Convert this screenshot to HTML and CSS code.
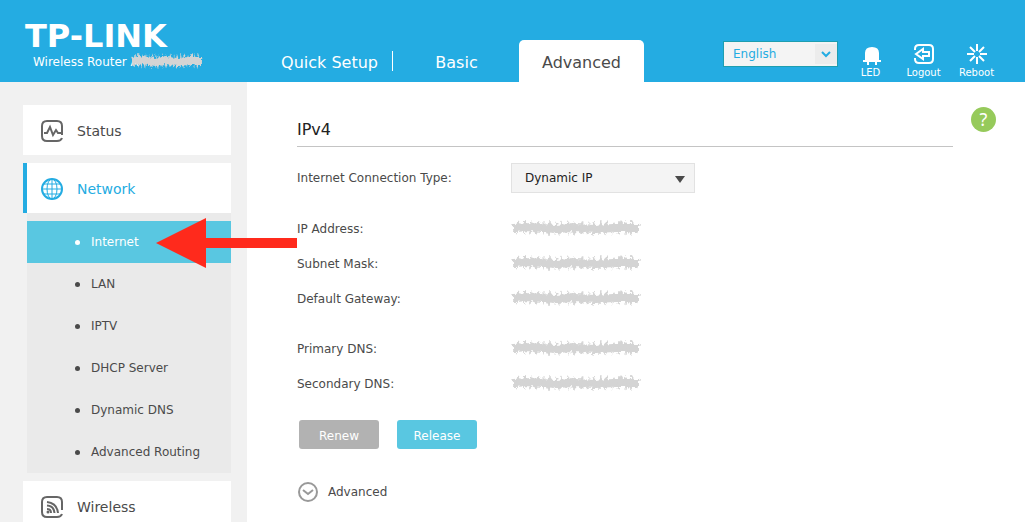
FILE: index.html
```html
<!doctype html>
<html lang="en">
<head>
  <meta charset="UTF-8">
  <title>TP-LINK Wireless Router</title>
  <link rel="stylesheet" href="styles.css">
</head>
<body>
  <!-- shared scribble used to hide private values -->
  <svg class="defs" aria-hidden="true">
    <symbol id="redacted" viewBox="0 0 130 16" preserveAspectRatio="none">
      <filter id="rough" x="-5%" y="-20%" width="110%" height="140%">
        <feTurbulence type="fractalNoise" baseFrequency="0.3" numOctaves="2" seed="4"/>
        <feDisplacementMap in="SourceGraphic" scale="5" xChannelSelector="R" yChannelSelector="G"/>
        <feGaussianBlur stdDeviation="0.4"/>
      </filter>
      <g filter="url(#rough)">
        <path class="smear" d="M2 8 L20 7 L44 9 L64 8 L84 9 L104 8 L128 8"/>
        <path class="scratch" d="M1 4 L6 12 L7 3 L13 12 L14 2 L19 12 L21 4 L25 13 L27 3 L32 12 L33 5 L37 13 L39 3 L44 12 L45 4 L49 13 L51 4 L56 12 L57 3 L63 13 L64 4 L69 12 L71 3 L76 12 L78 5 L82 13 L83 4 L88 12 L90 3 L94 13 L96 2 L101 12 L103 4 L107 12 L109 2 L114 12 L115 4 L120 13 L121 2 L126 11 L128 4"/>
      </g>
    </symbol>
  </svg>

  <header class="header">
    <div class="brand">
      <div class="logo">TP-LINK</div>
      <div class="model">Wireless Router A<svg class="redacted model-redacted" aria-hidden="true"><use href="#redacted"/></svg></div>
    </div>
    <nav class="tabs">
      <a class="tab first" href="#">Quick Setup</a>
      <a class="tab" href="#">Basic</a>
      <a class="tab active" href="#">Advanced</a>
    </nav>
    <div class="tools">
      <div class="lang">
        <select class="lang-select" aria-label="Language"><option>English</option></select>
        <svg class="lang-arrow" viewBox="0 0 22 20" aria-hidden="true"><path d="M7 8l4 4 4-4"/></svg>
      </div>
      <a class="tool" href="#">
        <svg width="22" height="22" viewBox="0 0 22 22"><path fill="#fff" d="M5 17v-7q0-6 7-6t7 6v7h2v2h-4v3h-2v-3H9v3H7v-3H3v-2z"/></svg>
        LED
      </a>
      <a class="tool" href="#">
        <svg class="line" width="22" height="22" viewBox="0 0 22 22"><path d="M2 7V6q0-4 4-4h10q4 0 4 4v10q0 4-4 4H6q-4 0-4-4v-1"/><path d="M3 11l7-5v3h6v4h-6v3z"/></svg>
        Logout
      </a>
      <a class="tool" href="#">
        <svg class="line" width="22" height="22" viewBox="0 0 22 22"><path d="M11 1v7M11 14v7M1 11h7M14 11h7M4 4l5 5M13 13l5 5M4 18l5-5M13 9l5-5"/></svg>
        Reboot
      </a>
    </div>
  </header>

  <div class="page">
    <aside class="sidebar">
      <a class="menu" href="#">
        <svg class="menu-icon" viewBox="0 0 24 24"><path d="M22 16V7q0-5-5-5H7Q2 2 2 7v10q0 5 5 5h10q4 0 5-3"/><path d="M4 14h3l3-6 3 8 3-5 2 3h3"/></svg>
        Status
      </a>
      <a class="menu current" href="#">
        <svg class="menu-icon" viewBox="0 0 24 24"><circle cx="12" cy="12" r="10"/><path class="thin" d="M12 2v20M2 12h20M4 7h16M4 17h16"/><ellipse class="thin" cx="12" cy="12" rx="5" ry="10"/></svg>
        Network
      </a>
      <div class="submenu">
        <a class="item selected" href="#">Internet
          <svg class="pointer" viewBox="0 0 141 50" aria-hidden="true"><path d="M0 25L50 0v20h91v10H50v20z"/></svg>
        </a>
        <a class="item" href="#">LAN</a>
        <a class="item" href="#">IPTV</a>
        <a class="item" href="#">DHCP Server</a>
        <a class="item" href="#">Dynamic DNS</a>
        <a class="item" href="#">Advanced Routing</a>
      </div>
      <a class="menu" href="#">
        <svg class="menu-icon" viewBox="0 0 24 24"><path d="M22 15V7q0-5-5-5H7Q2 2 2 7v10q0 5 5 5h10q4 0 5-3"/><path d="M7 7q10 1 11 11M7 10.500q7 .5 7.500 7.500M7 14q4 0 4 4"/><circle class="dot" cx="8" cy="17" r="1.500"/></svg>
        Wireless
      </a>
    </aside>

    <main class="content">
      <section class="panel">
        <h1 class="title">IPv4</h1>
        <div class="row type-row">
          <label class="label" for="type">Internet Connection Type:</label>
          <div class="type">
            <select class="type-select" id="type"><option>Dynamic IP</option></select>
            <svg class="type-arrow" viewBox="0 0 12 7" aria-hidden="true"><path d="M1 0h10L6 7z"/></svg>
          </div>
        </div>
        <div class="group">
          <div class="row"><span class="label">IP Address:</span><svg class="redacted" role="img" aria-label="hidden"><use href="#redacted"/></svg></div>
          <div class="row"><span class="label">Subnet Mask:</span><svg class="redacted" role="img" aria-label="hidden"><use href="#redacted"/></svg></div>
          <div class="row"><span class="label">Default Gateway:</span><svg class="redacted" role="img" aria-label="hidden"><use href="#redacted"/></svg></div>
        </div>
        <div class="group">
          <div class="row"><span class="label">Primary DNS:</span><svg class="redacted" role="img" aria-label="hidden"><use href="#redacted"/></svg></div>
          <div class="row"><span class="label">Secondary DNS:</span><svg class="redacted" role="img" aria-label="hidden"><use href="#redacted"/></svg></div>
        </div>
        <div class="buttons">
          <button class="btn off" type="button">Renew</button>
          <button class="btn" type="button">Release</button>
        </div>
        <a class="more" href="#">
          <svg width="22" height="22" viewBox="0 0 22 22"><circle cx="11" cy="11" r="9"/><path d="M6 9l5 4 5-4"/></svg>
          Advanced
        </a>
      </section>
      <button class="help" type="button" aria-label="Help">?</button>
    </main>
  </div>
</body>
</html>
```
FILE: styles.css
```css
*{
  box-sizing: border-box;
}

body{
  margin: 0;
  min-height: 100vh;
  display: flex;
  flex-direction: column;
  font: 12px/20px Verdana, "DejaVu Sans", sans-serif;
  color: #4a4a4a;
  background: #fff;
  overflow: hidden;
}

a{
  color: inherit;
  text-decoration: none;
}

svg{
  fill: none;
  flex: none;
}

.defs{
  position: absolute;
  width: 0;
  height: 0;
}

/* header */
.header{
  display: flex;
  height: 82px;
  color: #fff;
  background: #24ace2;
}

.brand{
  width: 257px;
  padding: 20px 0 0 25px;
}

.logo{
  font-size: 32px;
  font-weight: bold;
  line-height: 32px;
}

.model{
  display: flex;
  align-items: center;
  padding-left: 8px;
  white-space: nowrap;
}

.tabs{
  display: flex;
  align-items: flex-end;
  font-size: 16px;
}

.tab{
  position: relative;
  width: 125px;
  height: 42px;
  padding-top: 13px;
  text-align: center;
}

.tab.first{
  width: 137px;
  padding-left: 8px;
}

.tab.first::after{
  content: "";
  position: absolute;
  right: 1px;
  top: 11px;
  height: 20px;
  border-right: 1px solid #fff;
}

.tab.active{
  color: #4a4a4a;
  background: #fff;
  border-radius: 5px 5px 0 0;
}

.tools{
  display: flex;
  margin-left: auto;
  padding: 41px 22px 0 0;
}

.lang{
  position: relative;
  width: 115px;
  height: 26px;
  margin-right: 6px;
}

select{
  appearance: none;
  width: 100%;
  height: 100%;
  margin: 0;
  font: inherit;
  border-radius: 0;
}

.lang-select{
  padding: 0 9px 1px;
  color: #24ace2;
  background: #f4f4f4;
  border: 1px solid #1e9eb0;
}

.lang-arrow{
  position: absolute;
  right: 1px;
  top: 3px;
  width: 22px;
  height: 20px;
  background: #ececec;
  stroke: #24ace2;
  stroke-width: 2;
  pointer-events: none;
}

.tool{
  display: flex;
  flex-direction: column;
  align-items: center;
  width: 53px;
  padding-top: 2px;
  font-size: 10px;
  line-height: 16px;
}

.line{
  stroke: #fff;
  stroke-width: 2;
}

/* left menu */
.page{
  display: flex;
  flex: 1;
}

.sidebar{
  width: 247px;
  padding: 23px 16px 0 23px;
  background: #f1f1f1;
}

.menu{
  display: flex;
  align-items: center;
  gap: 13px;
  height: 50px;
  padding-left: 17px;
  padding-top: 2px;
  margin-bottom: 8px;
  font-size: 14px;
  background: #fff;
}

.menu.current{
  padding-left: 13px;
  margin-bottom: 0;
  color: #24ace2;
  border-left: 4px solid #24ace2;
}

.menu-icon{
  width: 24px;
  height: 24px;
  stroke: #666;
  stroke-width: 2;
}

.current .menu-icon{
  stroke: #24ace2;
}

.menu-icon .thin{
  stroke-width: 1;
}

.menu-icon .dot{
  fill: #666;
  stroke: none;
}

.submenu{
  margin: 0 0 8px 4px;
  padding-top: 8px;
  background: #eaeaea;
}

.item{
  position: relative;
  display: flex;
  align-items: center;
  gap: 11px;
  height: 42px;
  padding-left: 48px;
}

.item::before{
  content: "";
  width: 5px;
  height: 5px;
  border-radius: 50%;
  background: currentColor;
}

.item.selected{
  color: #fff;
  background: #59c7e1;
}

/* callout lying over the menu and the content */
.pointer{
  position: absolute;
  left: 129px;
  top: -3px;
  width: 141px;
  height: 50px;
  fill: #ff2a1c;
  z-index: 1;
}

/* content */
.content{
  display: flex;
  flex: 1;
  gap: 18px;
  padding: 25px 29px 0 50px;
  align-items: flex-start;
}

.panel{
  flex: 1;
}

.title{
  margin: 0 0 16px;
  padding: 13px 0 6px;
  font-size: 16px;
  font-weight: normal;
  line-height: 20px;
  color: #222;
  border-bottom: 1px solid #c4c4c4;
}

.row{
  display: flex;
  align-items: center;
  height: 35px;
}

.type-row{
  height: 30px;
  margin-bottom: 18px;
}

.label{
  width: 214px;
}

.type{
  position: relative;
  width: 184px;
  height: 30px;
}

.type-select{
  padding: 0 13px;
  color: #222;
  background: #f4f4f4;
  border: 1px solid #e2e2e2;
}

.type-arrow{
  position: absolute;
  right: 9px;
  top: 13px;
  width: 12px;
  height: 7px;
  fill: #4a4a4a;
  pointer-events: none;
}

.group{
  margin-bottom: 15px;
}

.redacted{
  width: 130px;
  height: 16px;
  margin-bottom: 2px;
}

.model-redacted{
  width: 72px;
  margin-left: -8px;
}

.smear{
  stroke: #d4d4d4;
  stroke-width: 8;
}

.scratch{
  stroke: #d4d4d4;
  stroke-width: 2;
}

.buttons{
  display: flex;
  gap: 18px;
  padding: 4px 2px 0;
}

.btn{
  width: 80px;
  height: 29px;
  padding: 2px 0 0;
  font: inherit;
  color: #fff;
  background: #59c7e1;
  border: 0;
  border-radius: 3px;
}

.btn.off{
  background: #b2b2b2;
}

.more{
  display: flex;
  align-items: center;
  gap: 9px;
  margin-top: 32px;
}

.more svg{
  stroke: #999;
  stroke-width: 2;
}

.help{
  width: 25px;
  height: 25px;
  padding: 0;
  font: 18px/25px "Noto Sans", sans-serif;
  color: #fff;
  background: #96ca5b;
  border: 0;
  border-radius: 50%;
}
```
